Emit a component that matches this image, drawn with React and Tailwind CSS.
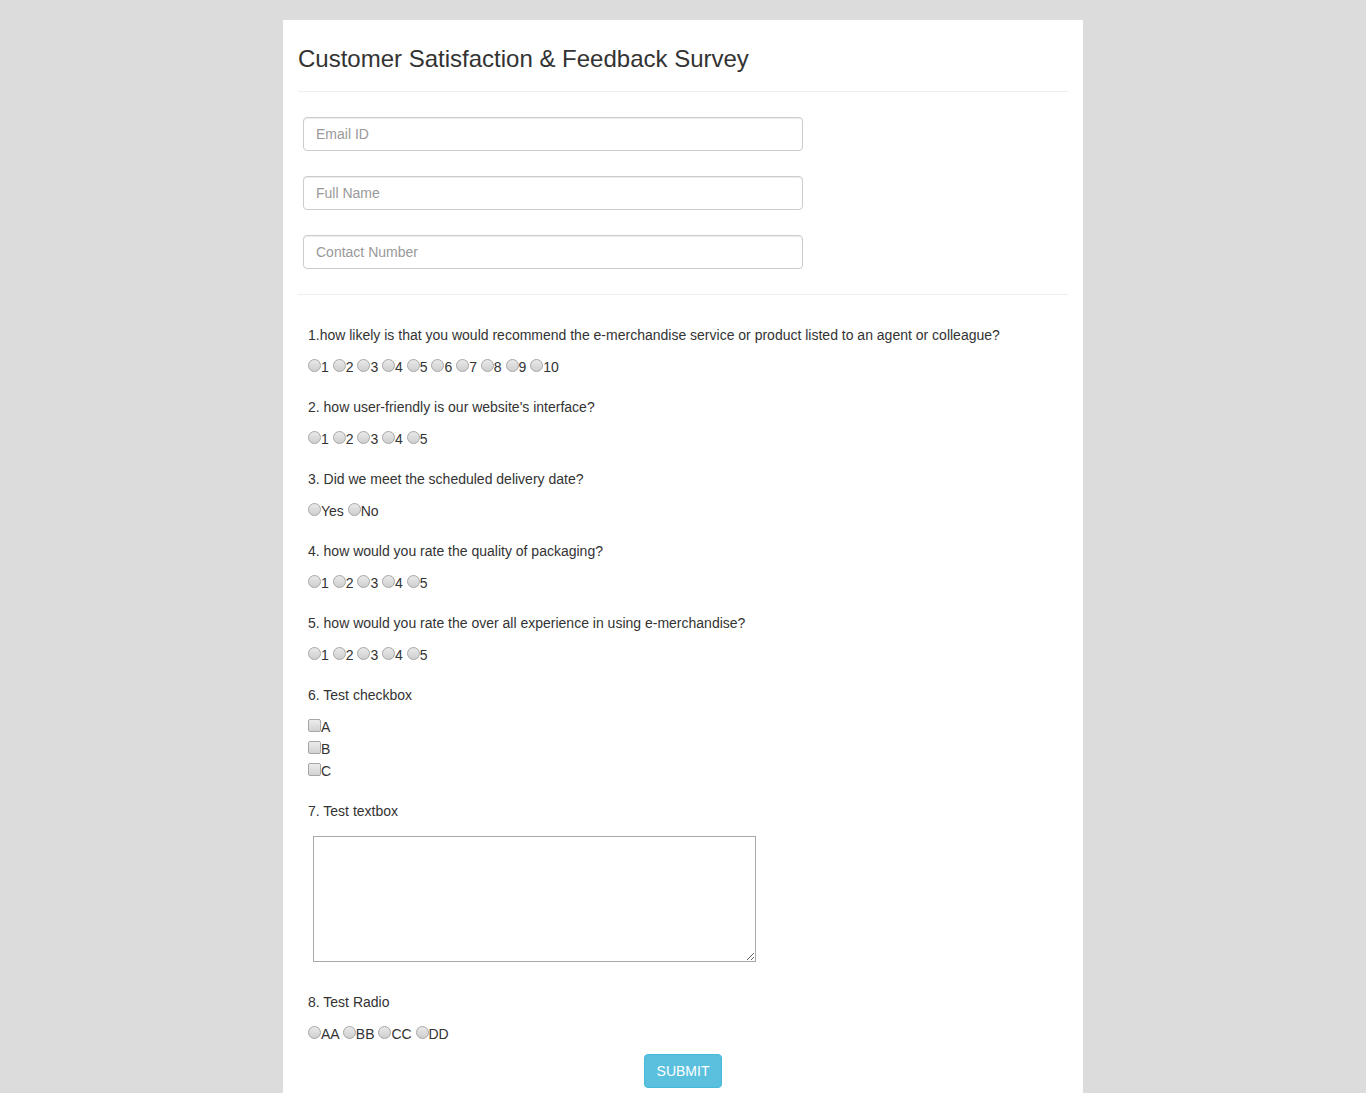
import React from 'react';

const Radio = () => (
  <span className="inline-block w-[13px] h-[13px] rounded-full border border-[#a6a6a6] bg-gradient-to-b from-[#e9e9e9] to-[#cfcfcf] align-[-1px] -translate-y-[1px]" />
);

const Check = () => (
  <span className="inline-block w-[13px] h-[13px] rounded-[2px] border border-[#a6a6a6] bg-gradient-to-b from-[#ececec] to-[#d2d2d2] align-[-1px] -translate-y-[1px]" />
);

const RadioRow = ({ options }) => (
  <div className="mt-[12px] h-5 leading-5 whitespace-nowrap">
    {options.map((o, i) => (
      <React.Fragment key={o}>
        {i > 0 && ' '}
        <Radio />
        {o}
      </React.Fragment>
    ))}
  </div>
);

const Question = ({ title, options }) => (
  <div className="mb-[20px]">
    <div className="h-5 leading-5">{title}</div>
    <RadioRow options={options} />
  </div>
);

const five = ['1', '2', '3', '4', '5'];

export default function App() {
  return (
    <div className="min-h-[1093px] bg-[#dcdcdc] pt-5 font-['Liberation_Sans',Arial,sans-serif] text-[14px] text-[#333]">
      <div className="mx-auto w-[800px] bg-white px-[15px] pt-[26px] pb-[5px]">
        <h3 className="text-[24px] leading-[26.4px] font-normal">Customer Satisfaction &amp; Feedback Survey</h3>
        <hr className="mt-[19px] mb-[25px] border-t border-[#eee]" />

        <div className="flex flex-col gap-[25px] pl-[5px]">
          {['Email ID', 'Full Name', 'Contact Number'].map((p) => (
            <input
              key={p}
              placeholder={p}
              className="w-[500px] h-[34px] rounded-[4px] border border-[#ccc] px-3 text-[14px] placeholder:text-[#999] shadow-[inset_0_1px_1px_rgba(0,0,0,0.075)] outline-none"
            />
          ))}
        </div>

        <hr className="mt-[25px] mb-[30px] border-t border-[#eee]" />

        <div className="pl-[10px]">
          <Question
            title="1.how likely is that you would recommend the e-merchandise service or product listed to an agent or colleague?"
            options={['1', '2', '3', '4', '5', '6', '7', '8', '9', '10']}
          />
          <Question title="2. how user-friendly is our website's interface?" options={five} />
          <Question title="3. Did we meet the scheduled delivery date?" options={['Yes', 'No']} />
          <Question title="4. how would you rate the quality of packaging?" options={five} />
          <Question title="5. how would you rate the over all experience in using e-merchandise?" options={five} />

          <div className="mb-[20px]">
            <div className="h-5 leading-5">6. Test checkbox</div>
            <div className="mt-[12px] flex flex-col gap-[2px]">
              {['A', 'B', 'C'].map((c) => (
                <div key={c} className="h-5 leading-5">
                  <Check />
                  {c}
                </div>
              ))}
            </div>
          </div>

          <div className="mb-[30px]">
            <div className="h-5 leading-5">7. Test textbox</div>
            <textarea className="mt-[15px] ml-[5px] block w-[443px] h-[126px] border border-[#a9a9a9] outline-none" />
          </div>

          <div>
            <div className="h-5 leading-5">8. Test Radio</div>
            <RadioRow options={['AA', 'BB', 'CC', 'DD']} />
          </div>
        </div>

        <div className="mt-[10px] flex justify-center">
          <button className="h-[34px] px-3 rounded-[4px] border border-[#46b8da] bg-[#5bc0de] text-white text-[14px]">
            SUBMIT
          </button>
        </div>
      </div>
    </div>
  );
}
